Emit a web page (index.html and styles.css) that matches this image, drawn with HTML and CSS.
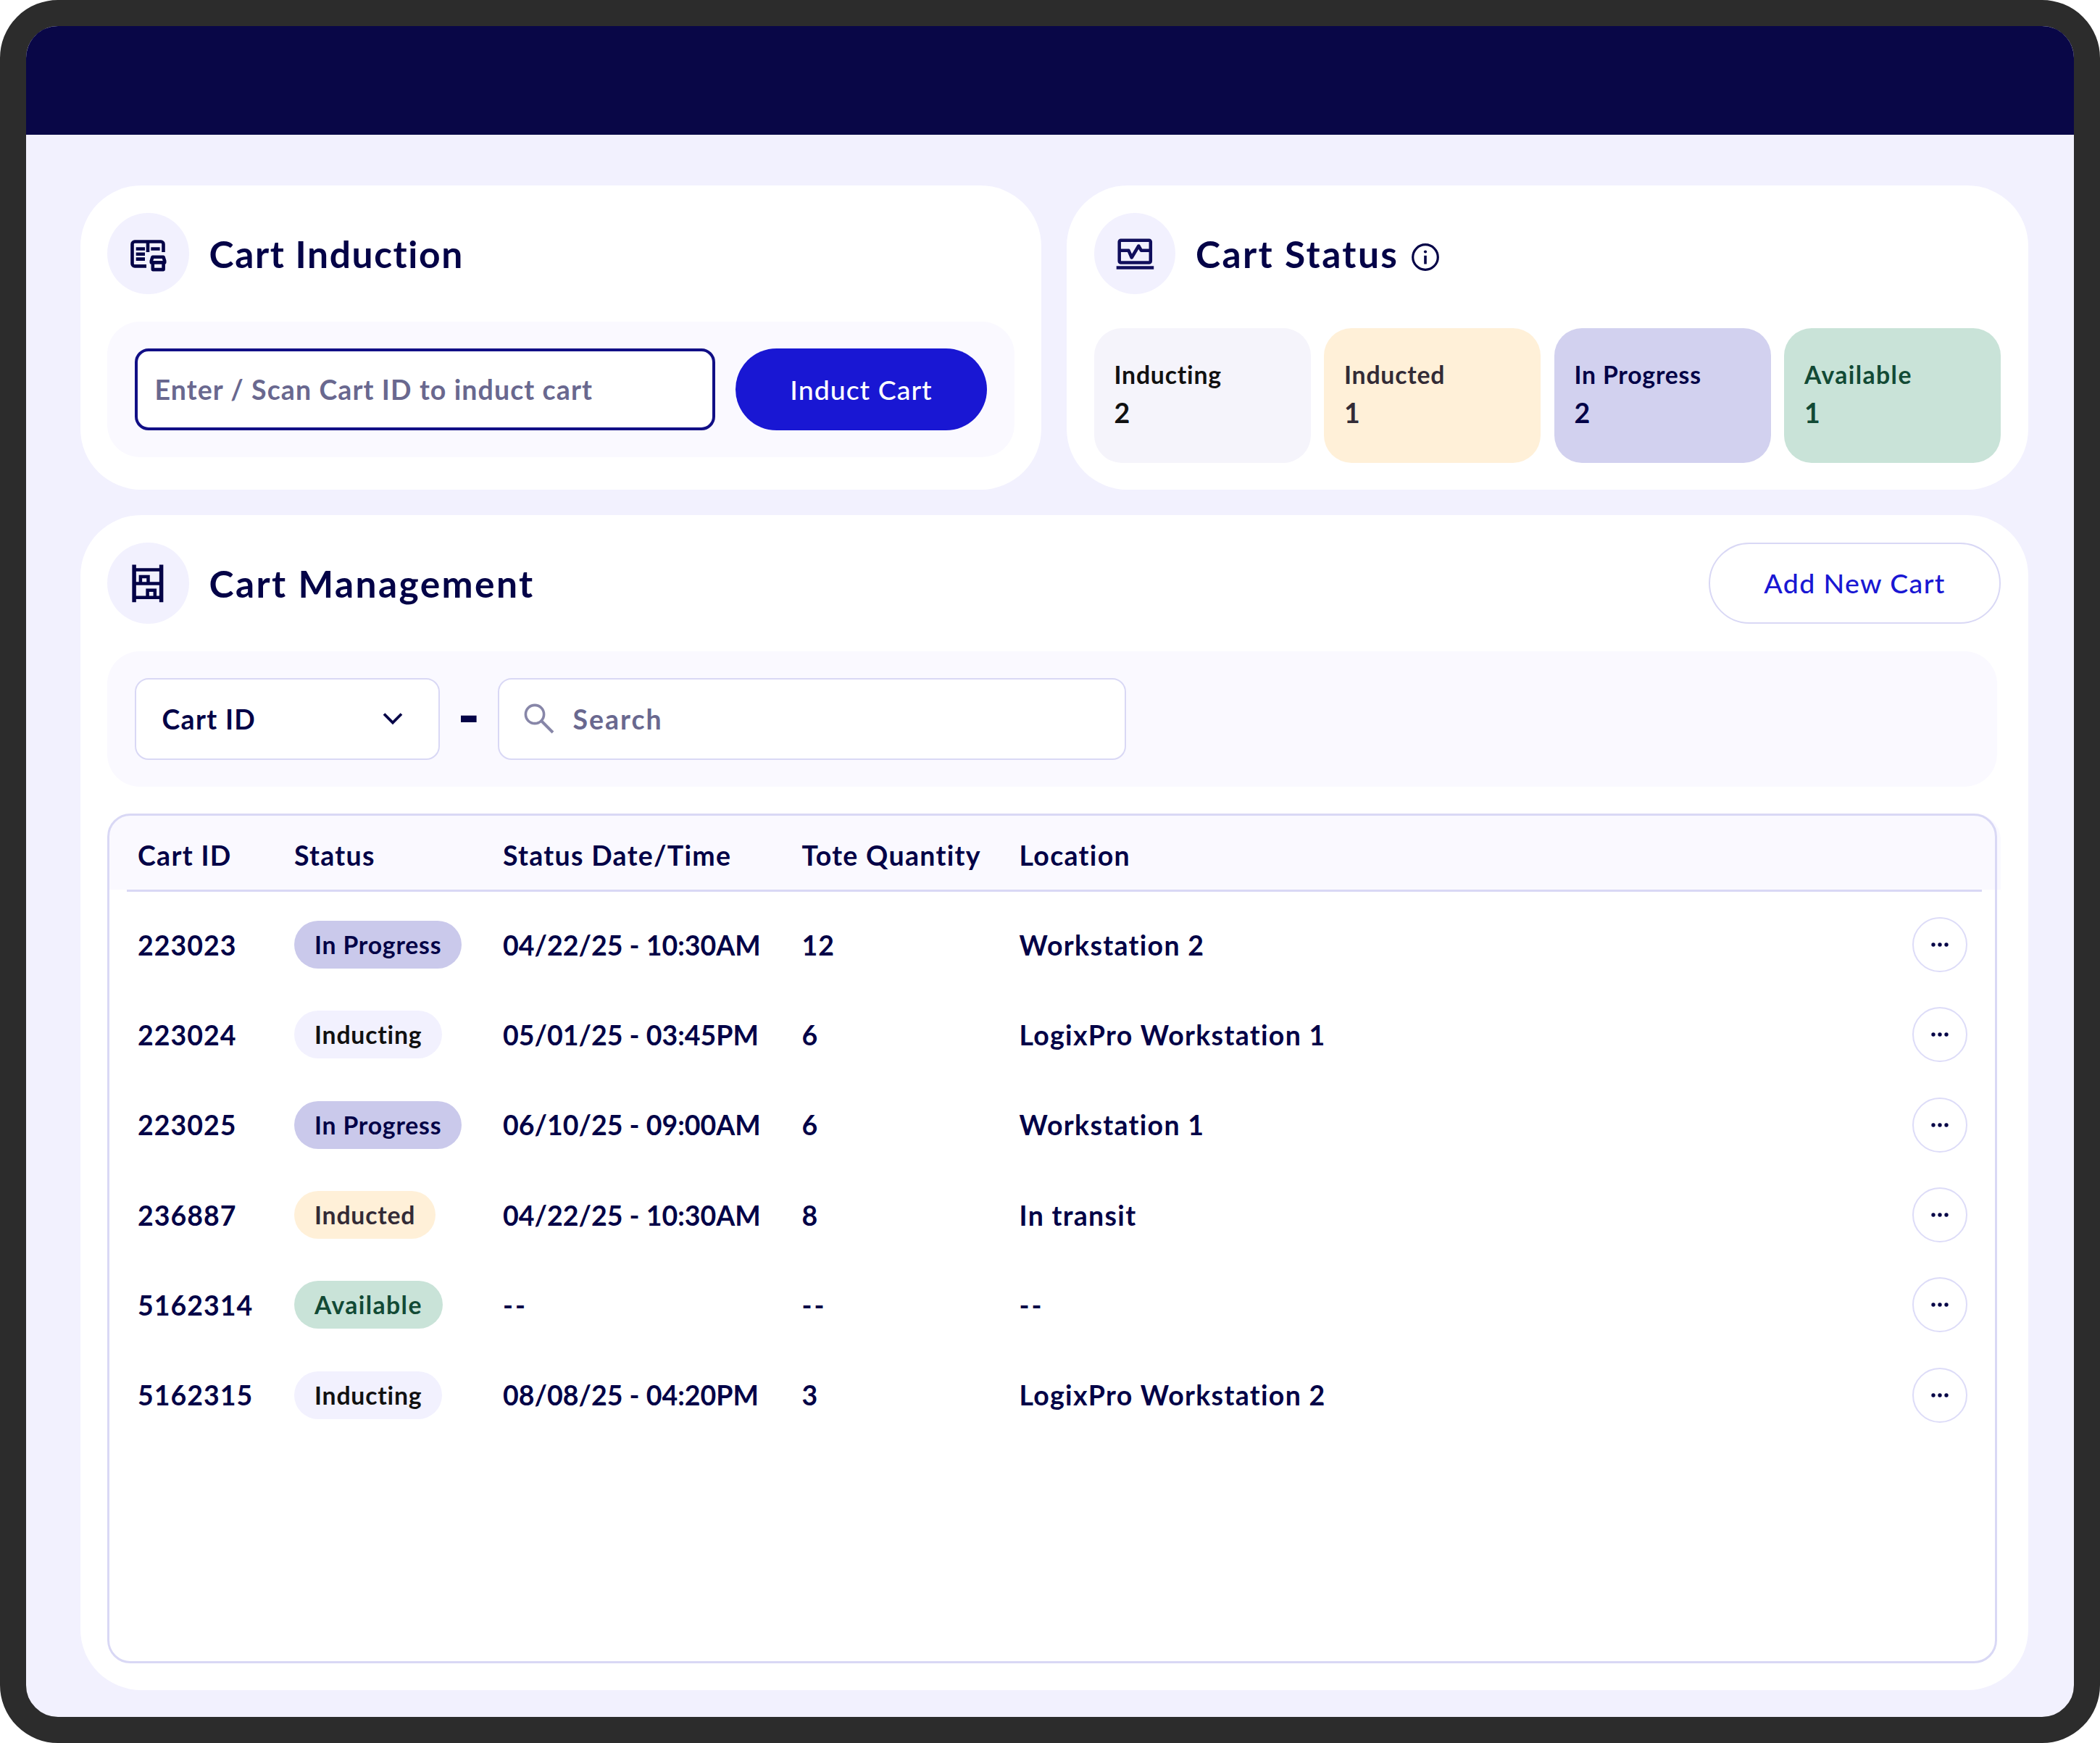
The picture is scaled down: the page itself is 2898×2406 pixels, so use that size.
FILE: index.html
```html
<!DOCTYPE html>
<html lang="en">

<head>
    <meta charset="UTF-8">
    <meta name="viewport" content="width=device-width, initial-scale=1.0">
    <title>Cart Management</title>
    <link rel="stylesheet" href="styles.css">
</head>

<body>
    <div class="device">
        <header class="topbar"></header>
        <main class="content">
            <div class="top-row">
                <section class="card induction">
                    <div class="card-head">
                        <div class="icon-circle">
                            <svg viewBox="0 0 112.5 112.5" fill="none" stroke="#040347" stroke-width="4.6">
                                <path d="M54 73.4H38a3.5 3.5 0 0 1-3.5-3.5V43a3.5 3.5 0 0 1 3.5-3.5h36a3.5 3.5 0 0 1 3.5 3.5v11M56 39.6V54" />
                                <path d="M39.7 49.5h12.3M39.7 56.7h12.3M39.7 63.6h12.3M60.3 49.5h12.3" />
                                <path d="M62.5 60.7h15l1.7 5.5v2.2h-18.4v-2.2zM62.8 68.4v9.7h14.8v-9.7" stroke-linejoin="round" />
                            </svg>
                        </div>
                        <h2>Cart Induction</h2>
                    </div>
                    <div class="panel induct-panel">
                        <div class="scan-input"><span>Enter / Scan Cart ID to induct cart</span></div>
                        <button class="btn btn-primary">Induct Cart</button>
                    </div>
                </section>

                <section class="card status">
                    <div class="card-head">
                        <div class="icon-circle">
                            <svg viewBox="0 0 112.5 112.5" fill="none" stroke="#100e5c" stroke-width="4.5">
                                <rect x="34.7" y="37.7" width="43.1" height="30.9" rx="2" />
                                <path d="M35 51.8h12.5L51.7 61.5 61.3 45.5 65 51.8h12.5" stroke-linejoin="round" />
                                <path d="M30.7 75.5h51.5" />
                            </svg>
                        </div>
                        <h2>Cart Status</h2>
                        <svg class="info" viewBox="0 0 38 38" fill="none" stroke="#040347" stroke-width="3.2">
                            <circle cx="19" cy="19" r="17.3" />
                            <path d="M19 16.8v11.7" stroke-width="3.6" />
                            <circle cx="19" cy="11.5" r="2.1" fill="#040347" stroke="none" />
                        </svg>
                    </div>
                    <div class="tiles">
                        <div class="tile inducting">
                            <p>Inducting</p>
                            <strong>2</strong>
                        </div>
                        <div class="tile inducted">
                            <p>Inducted</p>
                            <strong>1</strong>
                        </div>
                        <div class="tile progress">
                            <p>In Progress</p>
                            <strong>2</strong>
                        </div>
                        <div class="tile available">
                            <p>Available</p>
                            <strong>1</strong>
                        </div>
                    </div>
                </section>
            </div>

            <section class="card management">
                <div class="card-head">
                    <div class="icon-circle">
                        <svg viewBox="0 0 112.5 112.5" fill="none" stroke="#040347" stroke-width="4.5">
                            <path d="M37.1 30.5v51.7M74.6 30.5v51.7" stroke-width="5.5" />
                            <path d="M37 37.5h37.5M37 56.5h37.5M37 75.7h37.5" />
                            <path d="M45.9 56.5V47h10.6v9.5M55.6 75.7v-10h10.2v10" />
                        </svg>
                    </div>
                    <h2>Cart Management</h2>
                    <button class="btn btn-outline">Add New Cart</button>
                </div>

                <div class="panel filter-panel">
                    <div class="select">
                        <span>Cart ID</span>
                        <svg class="chevron" viewBox="0 0 28 18" fill="none" stroke="#040347" stroke-width="3.8">
                            <path d="M2 2.5l12 12 12-12" />
                        </svg>
                    </div>
                    <span class="dash">-</span>
                    <div class="search">
                        <svg class="search-icon" viewBox="0 0 42 42" fill="none" stroke="#8786a8" stroke-width="3.6">
                            <circle cx="15" cy="15" r="12.6" />
                            <path d="M24 24l16 16" stroke-width="4" />
                        </svg>
                        <span>Search</span>
                    </div>
                </div>

                <div class="table">
                    <div class="table-head">
                        <span>Cart ID</span>
                        <span>Status</span>
                        <span>Status Date/Time</span>
                        <span>Tote Quantity</span>
                        <span>Location</span>
                    </div>
                    <div class="table-line"></div>
                    <div class="table-body">
                        <div class="row">
                            <span class="num">223023</span>
                            <span><em class="pill progress">In Progress</em></span>
                            <span class="date">04/22/25 - 10:30AM</span>
                            <span class="num">12</span>
                            <span>Workstation 2</span>
                            <button class="more">
                                <svg viewBox="0 0 24 6" fill="#040347"><circle cx="3" cy="3" r="2.7" /><circle cx="12" cy="3" r="2.7" /><circle cx="21" cy="3" r="2.7" /></svg>
                            </button>
                        </div>
                        <div class="row">
                            <span class="num">223024</span>
                            <span><em class="pill inducting">Inducting</em></span>
                            <span class="date">05/01/25 - 03:45PM</span>
                            <span class="num">6</span>
                            <span>LogixPro Workstation 1</span>
                            <button class="more">
                                <svg viewBox="0 0 24 6" fill="#040347"><circle cx="3" cy="3" r="2.7" /><circle cx="12" cy="3" r="2.7" /><circle cx="21" cy="3" r="2.7" /></svg>
                            </button>
                        </div>
                        <div class="row">
                            <span class="num">223025</span>
                            <span><em class="pill progress">In Progress</em></span>
                            <span class="date">06/10/25 - 09:00AM</span>
                            <span class="num">6</span>
                            <span>Workstation 1</span>
                            <button class="more">
                                <svg viewBox="0 0 24 6" fill="#040347"><circle cx="3" cy="3" r="2.7" /><circle cx="12" cy="3" r="2.7" /><circle cx="21" cy="3" r="2.7" /></svg>
                            </button>
                        </div>
                        <div class="row">
                            <span class="num">236887</span>
                            <span><em class="pill inducted">Inducted</em></span>
                            <span class="date">04/22/25 - 10:30AM</span>
                            <span class="num">8</span>
                            <span>In transit</span>
                            <button class="more">
                                <svg viewBox="0 0 24 6" fill="#040347"><circle cx="3" cy="3" r="2.7" /><circle cx="12" cy="3" r="2.7" /><circle cx="21" cy="3" r="2.7" /></svg>
                            </button>
                        </div>
                        <div class="row">
                            <span class="num">5162314</span>
                            <span><em class="pill available">Available</em></span>
                            <span class="empty">--</span>
                            <span class="empty">--</span>
                            <span class="empty">--</span>
                            <button class="more">
                                <svg viewBox="0 0 24 6" fill="#040347"><circle cx="3" cy="3" r="2.7" /><circle cx="12" cy="3" r="2.7" /><circle cx="21" cy="3" r="2.7" /></svg>
                            </button>
                        </div>
                        <div class="row">
                            <span class="num">5162315</span>
                            <span><em class="pill inducting">Inducting</em></span>
                            <span class="date">08/08/25 - 04:20PM</span>
                            <span class="num">3</span>
                            <span>LogixPro Workstation 2</span>
                            <button class="more">
                                <svg viewBox="0 0 24 6" fill="#040347"><circle cx="3" cy="3" r="2.7" /><circle cx="12" cy="3" r="2.7" /><circle cx="21" cy="3" r="2.7" /></svg>
                            </button>
                        </div>
                    </div>
                </div>
            </section>
        </main>
    </div>
</body>

</html>
```
FILE: styles.css
```css
* {
    box-sizing: border-box;
}

body {
    margin: 0;
    background-color: #ffffff;
    color: #040347;
    font-family: Lato, "Open Sans", sans-serif;
    font-size: 37.5px;
    font-weight: 700;
    letter-spacing: 1.3px;
}

h2,
p {
    margin: 0;
}

button {
    font-family: inherit;
    padding: 0;
}

.device {
    width: 2898px;
    height: 2406px;
    border: 36px solid #2c2c2c;
    border-radius: 80px;
    background-color: #f2f1fe;
    overflow: hidden;
}

.topbar {
    height: 149.5px;
    background-color: #090747;
}

.content {
    display: flex;
    flex-direction: column;
    gap: 35.5px;
    padding: 70.5px 63.5px 0 74.5px;
}

.top-row {
    display: grid;
    grid-template-columns: 1fr 1fr;
    gap: 35px;
    height: 419.5px;
}

.card {
    background-color: #ffffff;
    border-radius: 84px;
    padding: 37.5px;
}

.card-head {
    display: flex;
    align-items: center;
    height: 112.5px;
}

.icon-circle {
    width: 112.5px;
    height: 112.5px;
    border-radius: 50%;
    background-color: #f2f1fe;
    margin-right: 28px;
}

.icon-circle svg {
    display: block;
}

h2 {
    font-size: 51.5px;
    font-weight: 700;
    line-height: 60px;
    letter-spacing: 2.4px;
}

.induction h2 {
    letter-spacing: 1.6px;
}

.info {
    width: 38px;
    height: 38px;
    margin: 10px 0 0 18px;
}

.panel {
    display: flex;
    align-items: center;
    height: 187.5px;
    margin-top: 37.5px;
    padding: 0 37.5px;
    border-radius: 45px;
    background-color: #faf9ff;
}

.induct-panel {
    gap: 28px;
}

.scan-input {
    display: flex;
    align-items: center;
    flex: 1;
    height: 112.5px;
    padding-left: 24px;
    border: 4.7px solid #110f86;
    border-radius: 19px;
    background-color: #ffffff;
    color: #69688f;
    letter-spacing: 1.1px;
}

.btn {
    height: 112.5px;
    border-radius: 57px;
    font-size: 37.5px;
    font-weight: 500;
    letter-spacing: 1px;
}

.btn-primary {
    width: 347px;
    border: none;
    background-color: #1917d3;
    color: #ffffff;
}

.btn-outline {
    width: 403px;
    margin-left: auto;
    border: 2.5px solid #d9d8f5;
    background-color: #ffffff;
    color: #1917d3;
    letter-spacing: 1.4px;
}

.tiles {
    display: grid;
    grid-template-columns: repeat(4, 1fr);
    gap: 18.5px;
    margin-top: 47px;
}

.tile {
    height: 185.5px;
    padding: 38px 28px 0;
    border-radius: 38px;
}

.tile p {
    font-size: 33.75px;
    line-height: 52px;
    letter-spacing: 0.8px;
}

.tile strong {
    display: block;
    font-weight: 700;
    line-height: 54px;
}

.inducting {
    background-color: #f5f4fb;
    color: #111111;
}

.inducted {
    background-color: #fff0d8;
    color: #332b36;
}

.progress {
    background-color: #d2d1ef;
    color: #040347;
}

.available {
    background-color: #c9e3d8;
    color: #124a35;
}

.tile.available p,
.pill.available {
    letter-spacing: 1.4px;
}

.management {
    height: 1622px;
}

.filter-panel {
    margin-right: 5px;
}

.select,
.search {
    display: flex;
    align-items: center;
    height: 112.5px;
    border: 2.5px solid #d9d8f5;
    border-radius: 19px;
    background-color: #ffffff;
}

.select {
    justify-content: space-between;
    width: 421.5px;
    padding: 0 49px 0 36px;
}

.chevron {
    width: 28px;
    height: 18px;
}

.dash {
    width: 79.5px;
    padding-bottom: 15px;
    text-align: center;
    font-size: 82px;
    font-weight: 900;
    line-height: 80px;
    letter-spacing: 0;
}

.search {
    width: 867.5px;
    padding-left: 34px;
    color: #69688f;
    letter-spacing: 2px;
}

.search-icon {
    width: 42px;
    height: 42px;
    margin-right: 26px;
}

.table {
    position: relative;
    height: 1173px;
    margin: 37px 5px 0 0;
}

/* border sits above the header fill, which runs slightly past it */
.table::after {
    content: "";
    position: absolute;
    inset: 0;
    border: 3px solid #d9d8f5;
    border-radius: 32px;
    pointer-events: none;
}

.table-head,
.row {
    display: grid;
    grid-template-columns: 216px 288px 412.5px 300px 1fr 76px;
    align-items: center;
}

.table-head {
    height: 105px;
    margin-right: -5px;
    padding: 10px 0 0 42px;
    border-radius: 36px 36px 0 0;
    background-color: #faf9ff;
}

.table-line {
    height: 3px;
    margin: 0 21px 0 27px;
    background-color: #d9d8f5;
}

.table-body {
    padding: 11px 41px 0 42px;
}

.row {
    height: 124.3px;
}

.num {
    letter-spacing: 1px;
}

.date {
    letter-spacing: 0;
}

.empty {
    letter-spacing: 3px;
}

.pill {
    display: inline-block;
    height: 66px;
    padding: 0 28px;
    border-radius: 33px;
    font-size: 33.75px;
    font-style: normal;
    line-height: 66px;
    letter-spacing: 0.8px;
    vertical-align: middle;
}

.pill.progress {
    background-color: #cac9eb;
}

.pill.inducting {
    background-color: #f2f1fe;
}

.more {
    display: flex;
    align-items: center;
    justify-content: center;
    width: 76px;
    height: 76px;
    border: 2px solid #dddcf8;
    border-radius: 50%;
    background-color: #ffffff;
}

.more svg {
    width: 24px;
    height: 6px;
}
```
